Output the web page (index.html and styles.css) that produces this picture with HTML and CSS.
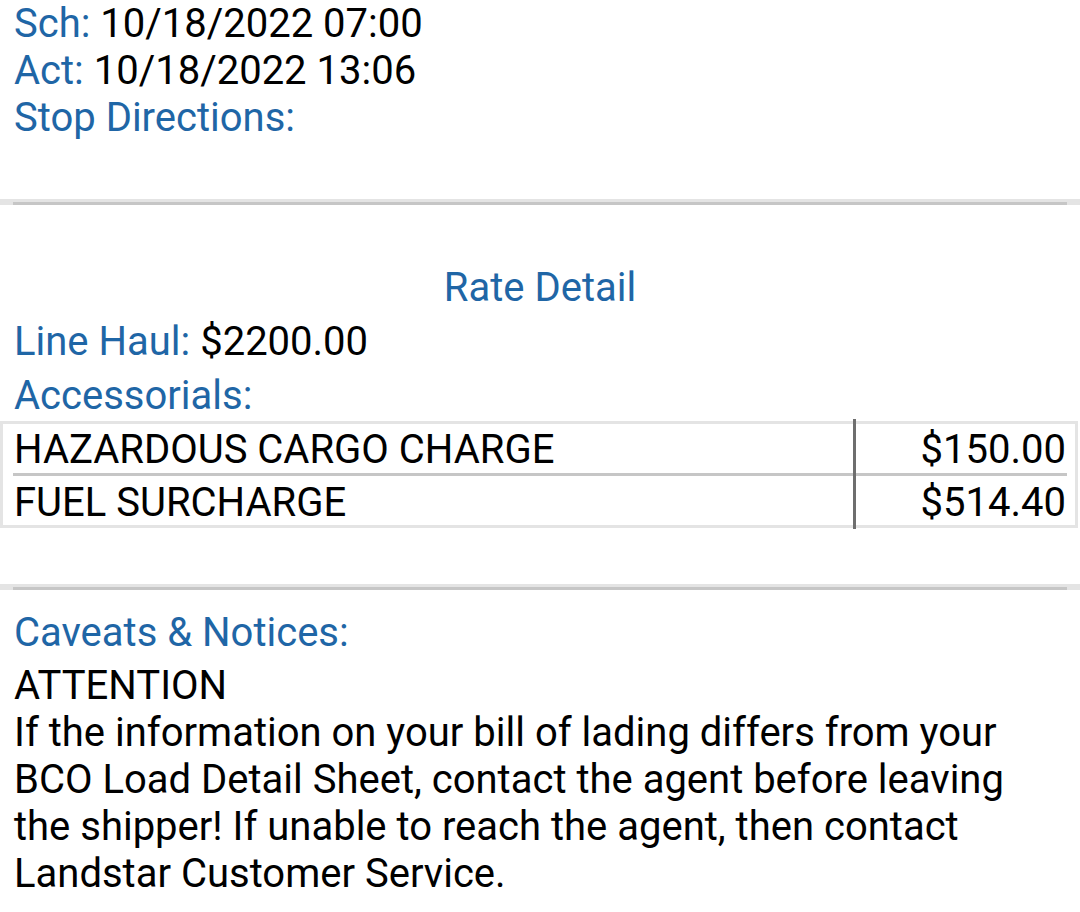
FILE: index.html
```html
<!DOCTYPE html>
<html>
<head>
<meta charset="utf-8">
<link rel="stylesheet" href="styles.css">
</head>
<body>
<div class="page">
  <section class="stop">
    <div class="line"><span class="lbl">Sch:</span> <span class="val">10/18/2022 07:00</span></div>
    <div class="line"><span class="lbl">Act:</span> <span class="val">10/18/2022 13:06</span></div>
    <div class="line"><span class="lbl">Stop Directions:</span></div>
  </section>

  <div class="divider"><div class="divider-line"></div></div>

  <section class="rate">
    <div class="title">Rate Detail</div>
    <div class="rline"><span class="lbl">Line Haul:</span> <span class="val">$2200.00</span></div>
    <div class="rline"><span class="lbl">Accessorials:</span></div>
    <div class="acc">
      <div class="acc-row">
        <div class="acc-name">HAZARDOUS CARGO CHARGE</div>
        <div class="acc-amt">$150.00</div>
      </div>
      <div class="acc-sep"></div>
      <div class="acc-row acc-row-2">
        <div class="acc-name">FUEL SURCHARGE</div>
        <div class="acc-amt">$514.40</div>
      </div>
    </div>
  </section>

  <div class="divider divider-2"><div class="divider-line"></div></div>

  <section class="caveats">
    <div class="rline"><span class="lbl">Caveats &amp; Notices:</span></div>
    <div class="notice">ATTENTION<br>If the information on your bill of lading differs from your BCO Load Detail Sheet, contact the agent before leaving the shipper! If unable to reach the agent, then contact Landstar Customer Service.</div>
  </section>
</div>
</body>
</html>
```

FILE: styles.css
```css
html, body {
  margin: 0;
  padding: 0;
  background: #ffffff;
}

body {
  font-family: Roboto, "Noto Sans", sans-serif;
  font-size: 40px;
  line-height: 47px;
  color: #000000;
  overflow: hidden;
}

.page {
  width: 1080px;
}

.lbl {
  color: #1f66a6;
}

.val {
  color: #000000;
}

.stop {
  padding: 0 14px;
}

.line {
  height: 47px;
  white-space: nowrap;
}

.divider {
  margin-top: 58px;
  height: 6px;
  background: #e4e4e4;
  display: flex;
  flex-direction: column;
  justify-content: flex-end;
}

.divider-line {
  height: 3px;
  margin: 0 13px;
  background: #c6c6c6;
}

.divider-2 {
  margin-top: 56px;
}

.rate {
  padding-top: 56px;
}

.title {
  text-align: center;
  color: #1f66a6;
  line-height: 54px;
  height: 54px;
}

.rline {
  line-height: 54px;
  height: 54px;
  padding: 0 14px;
  white-space: nowrap;
}

.acc {
  position: relative;
  margin-top: -2px;
  width: 1072px;
  border: 3px solid #e4e4e4;
}

.acc::after {
  content: "";
  position: absolute;
  left: 850px;
  top: -5px;
  bottom: -4px;
  width: 3px;
  background: #6e6e6e;
}

.acc-row {
  display: grid;
  grid-template-columns: 850px 1fr;
  box-sizing: border-box;
  height: 49px;
  padding-top: 3px;
  line-height: 46px;
}

.acc-row-2 {
  padding-top: 4px;
  line-height: 45px;
}

.acc-name {
  padding-left: 11px;
  white-space: nowrap;
}

.acc-amt {
  text-align: right;
  padding-right: 9px;
  white-space: nowrap;
}

.acc-sep {
  height: 3px;
  margin: 0 8px 0 10px;
  background: #c6c6c6;
}

.caveats {
  padding-top: 16px;
}

.notice {
  margin-top: 2px;
  padding: 0 14px;
  line-height: 47px;
}
```
